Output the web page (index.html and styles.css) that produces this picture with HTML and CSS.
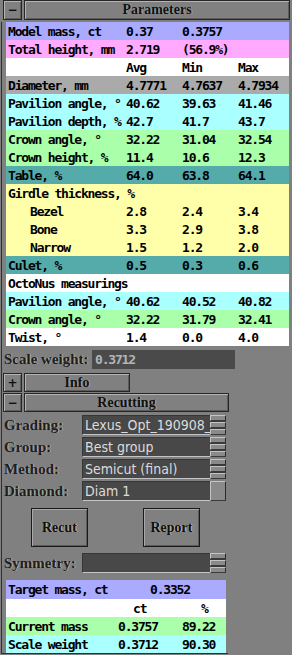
FILE: index.html
```html
<!DOCTYPE html>
<html lang="en">
<head>
    <meta charset="UTF-8">
    <meta name="viewport" content="width=device-width, initial-scale=1.0">
    <title>Parameters</title>
    <link rel="stylesheet" href="styles.css">
</head>
<body>
    <div class="bar-row top">
        <div class="toggle">&minus;</div>
        <div class="bar">Parameters</div>
    </div>
    <div class="frame">
        <div class="params">
            <div class="prow lav"><span>Model mass, ct</span><span>0.37</span><span>0.3757</span><span></span></div>
            <div class="prow pink"><span>Total height, mm</span><span>2.719</span><span>(56.9%)</span><span></span></div>
            <div class="prow white"><span></span><span>Avg</span><span>Min</span><span>Max</span></div>
            <div class="prow grey"><span>Diameter, mm</span><span>4.7771</span><span>4.7637</span><span>4.7934</span></div>
            <div class="prow cyan"><span>Pavilion angle, &deg;</span><span>40.62</span><span>39.63</span><span>41.46</span></div>
            <div class="prow cyan"><span>Pavilion depth, %</span><span>42.7</span><span>41.7</span><span>43.7</span></div>
            <div class="prow green"><span>Crown angle, &deg;</span><span>32.22</span><span>31.04</span><span>32.54</span></div>
            <div class="prow green"><span>Crown height, %</span><span>11.4</span><span>10.6</span><span>12.3</span></div>
            <div class="prow teal"><span>Table, %</span><span>64.0</span><span>63.8</span><span>64.1</span></div>
            <div class="prow yellow"><span>Girdle thickness, %</span><span></span><span></span><span></span></div>
            <div class="prow yellow sub"><span>Bezel</span><span>2.8</span><span>2.4</span><span>3.4</span></div>
            <div class="prow yellow sub"><span>Bone</span><span>3.3</span><span>2.9</span><span>3.8</span></div>
            <div class="prow yellow sub"><span>Narrow</span><span>1.5</span><span>1.2</span><span>2.0</span></div>
            <div class="prow teal"><span>Culet, %</span><span>0.5</span><span>0.3</span><span>0.6</span></div>
            <div class="prow white"><span>OctoNus measurings</span><span></span><span></span><span></span></div>
            <div class="prow cyan"><span>Pavilion angle, &deg;</span><span>40.62</span><span>40.52</span><span>40.82</span></div>
            <div class="prow green"><span>Crown angle, &deg;</span><span>32.22</span><span>31.79</span><span>32.41</span></div>
            <div class="prow white"><span>Twist, &deg;</span><span>1.4</span><span>0.0</span><span>4.0</span></div>
        </div>

        <div class="scale-row">
            <span class="lbl">Scale weight:</span>
            <div class="field">0.3712</div>
        </div>

        <div class="bar-row info">
            <div class="toggle">+</div>
            <div class="bar">Info</div>
        </div>
        <div class="bar-row recut">
            <div class="toggle">&minus;</div>
            <div class="bar">Recutting</div>
        </div>

        <div class="recutting">
            <div class="combo-row first">
                <span class="lbl">Grading:</span>
                <div class="combo">
                    <div class="combo-text">Lexus_Opt_190908_</div>
                    <div class="spin"><i></i><i></i><i></i></div>
                </div>
            </div>
            <div class="combo-row">
                <span class="lbl">Group:</span>
                <div class="combo">
                    <div class="combo-text">Best group</div>
                    <div class="spin"><i></i><i></i><i></i></div>
                </div>
            </div>
            <div class="combo-row">
                <span class="lbl">Method:</span>
                <div class="combo">
                    <div class="combo-text">Semicut (final)</div>
                    <div class="spin"><i></i><i></i><i></i></div>
                </div>
            </div>
            <div class="combo-row">
                <span class="lbl">Diamond:</span>
                <div class="combo">
                    <div class="combo-text">Diam 1</div>
                    <div class="spin single"><i></i></div>
                </div>
            </div>

            <div class="buttons">
                <div class="btn">Recut</div>
                <div class="btn">Report</div>
            </div>

            <div class="combo-row symmetry">
                <span class="lbl">Symmetry:</span>
                <div class="combo">
                    <div class="combo-text"></div>
                    <div class="spin"><i></i><i></i><i></i></div>
                </div>
            </div>

            <div class="mass">
                <div class="mrow lav"><span>Target mass, ct</span><span class="target">0.3352</span></div>
                <div class="mrow white"><span></span><span class="unit-ct">ct</span><span class="unit-pc">%</span></div>
                <div class="mrow green"><span>Current mass</span><span>0.3757</span><span>89.22</span></div>
                <div class="mrow cyan"><span>Scale weight</span><span>0.3712</span><span>90.30</span></div>
            </div>
        </div>
    </div>
</body>
</html>
```

FILE: styles.css
```css
body {
    margin: 0;
    padding: 0;
    width: 292px;
    height: 655px;
    overflow: hidden;
    background-color: #808080;
    font-family: "DejaVu Sans Mono", monospace;
    font-weight: bold;
    font-size: 13px;
    letter-spacing: -1.2px;
    color: #000000;
}

/* section title bars */
.bar-row {
    display: flex;
    gap: 2px;
    height: 19px;
}

.bar-row.top {
    height: 20px;
    margin-left: 3px;
    width: 287px;
}

.toggle,
.bar {
    box-sizing: border-box;
    border: 1px solid #262626;
    box-shadow: inset 1px 1px #b4b4b4, inset -1px -1px #5c5c5c;
    background-color: #808080;
    display: flex;
    align-items: center;
    justify-content: center;
}

.toggle {
    width: 19px;
    font-family: "DejaVu Sans", sans-serif;
    font-size: 12px;
    letter-spacing: 0;
    color: #101010;
}

.bar {
    flex: 1;
    font-family: "Liberation Serif", serif;
    font-size: 14px;
    letter-spacing: 0;
    color: #111111;
    text-shadow: 1px 0 0 #a8a8a8;
}

.frame {
    margin-left: 1px;
    border-left: 1px solid #303030;
}

/* parameters table */
.params {
    margin-top: 2px;
    margin-left: 4px;
    width: 283px;
}

.prow {
    display: grid;
    grid-template-columns: 120px 56px 56px 51px;
    height: 18px;
    align-items: center;
    white-space: nowrap;
}

.prow span:first-child {
    padding-left: 2px;
}

.prow.sub span:first-child {
    padding-left: 24px;
}

.lav { background-color: #aaaaff; }
.pink { background-color: #ffaaff; }
.white { background-color: #ffffff; }
.grey { background-color: #aaaaaa; }
.cyan { background-color: #aaffff; }
.green { background-color: #aaffaa; }
.teal { background-color: #55aaaa; }
.yellow { background-color: #ffffaa; }

/* labels in the lower panel */
.lbl {
    font-family: "Liberation Serif", serif;
    font-size: 15px;
    letter-spacing: 0;
    color: #1e1e1e;
    text-shadow: 1px 0 0 #b0b0b0;
}

.scale-row {
    display: flex;
    align-items: center;
    height: 19px;
    margin-top: 4px;
}

.scale-row .lbl {
    width: 88px;
    padding-left: 2px;
}

.field {
    box-sizing: border-box;
    width: 143px;
    height: 19px;
    background-color: #4a4a4a;
    color: #b4b4b4;
    padding-left: 3px;
    line-height: 19px;
}

.bar-row.info {
    margin-top: 4px;
    margin-left: 1px;
    width: 127px;
}

.bar-row.recut {
    margin-top: 1px;
    margin-left: 1px;
    width: 226px;
}

.recutting {
    width: 226px;
    border-bottom: 1px solid #303030;
}

.combo-row {
    display: flex;
    align-items: center;
    height: 20px;
    margin-top: 2px;
}

.combo-row.first {
    margin-top: 3px;
}

.combo-row .lbl {
    width: 78px;
    padding-left: 2px;
}

.combo {
    display: flex;
    width: 144px;
    height: 20px;
}

.combo-text {
    box-sizing: border-box;
    width: 128px;
    height: 20px;
    background-color: #484848;
    border-top: 1px solid #363636;
    border-left: 1px solid #363636;
    border-bottom: 1px solid #c4c4c4;
    color: #dcdcdc;
    font-family: "DejaVu Sans Condensed", "DejaVu Sans", sans-serif;
    font-weight: normal;
    font-size: 14px;
    letter-spacing: 0;
    line-height: 18px;
    padding-left: 2px;
    overflow: hidden;
    white-space: nowrap;
}

.spin {
    width: 16px;
    height: 20px;
    display: flex;
    flex-direction: column;
    gap: 1px;
    background-color: #3a3a3a;
}

.spin i {
    flex: 1;
    box-sizing: border-box;
    background-color: #8a8a8a;
    border-top: 1px solid #c4c4c4;
    border-left: 1px solid #c4c4c4;
    border-bottom: 1px solid #3a3a3a;
    border-right: 1px solid #2a2a2a;
}

.buttons {
    display: flex;
    gap: 55px;
    margin-top: 7px;
    padding-left: 29px;
}

.btn {
    box-sizing: border-box;
    width: 57px;
    height: 39px;
    border: 1px solid #1a1a1a;
    box-shadow: inset 1px 1px #a8a8a8, inset -1px -1px #5a5a5a;
    display: flex;
    align-items: center;
    justify-content: center;
    font-family: "Liberation Serif", serif;
    font-size: 14px;
    letter-spacing: 0;
    color: #101010;
    text-shadow: 1px 0 0 #bcbcbc;
}

.combo-row.symmetry {
    margin-top: 6px;
}

/* target mass table */
.mass {
    margin-top: 7px;
    margin-left: 4px;
    width: 220px;
}

.mrow {
    display: grid;
    grid-template-columns: 112px 64px 44px;
    height: 18px;
    align-items: center;
    white-space: nowrap;
}

.mrow:first-child {
    height: 19px;
}

.mrow span:first-child {
    padding-left: 2px;
}

.mrow .target {
    grid-column: 2 / 4;
    padding-left: 32px;
}

.mrow .unit-ct {
    padding-left: 15px;
}

.mrow .unit-pc {
    padding-left: 19px;
}
```
